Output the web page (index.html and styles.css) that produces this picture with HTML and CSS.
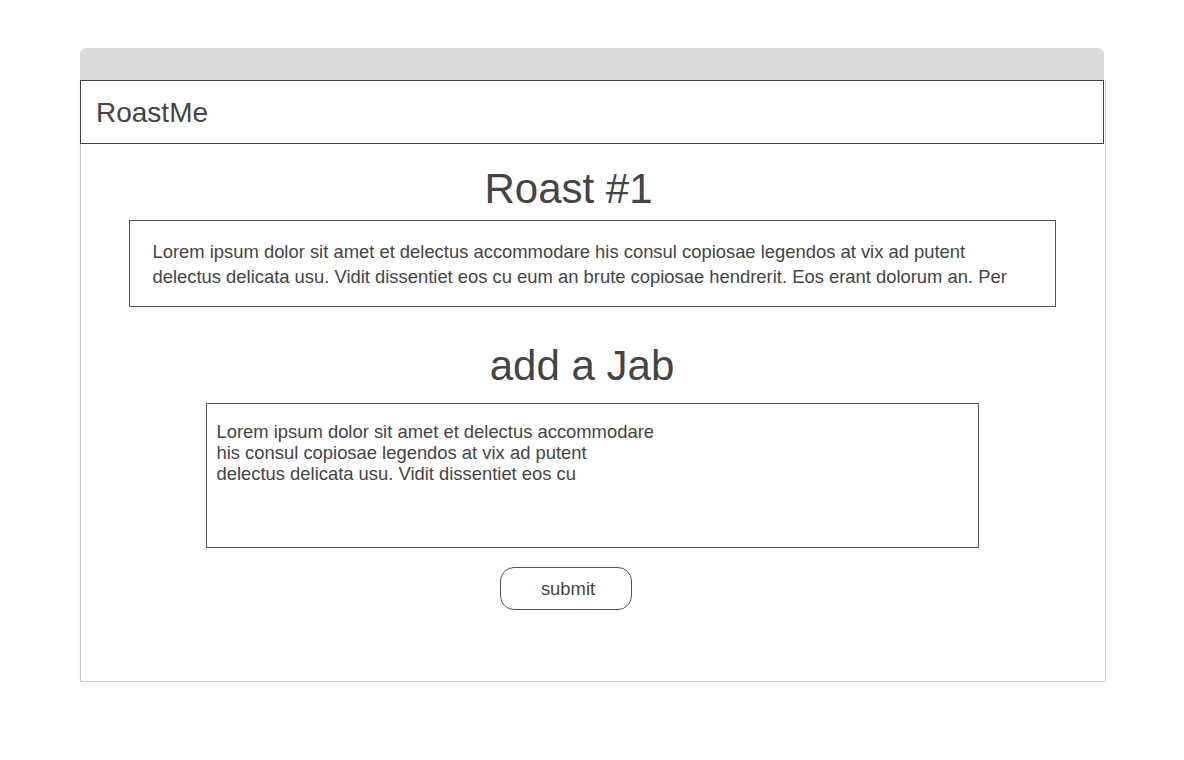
FILE: index.html
```html
<!DOCTYPE html>
<html>
<head>
<meta charset="utf-8">
<link rel="stylesheet" href="styles.css">
</head>
<body>
<div class="page">
  <div class="window">
    <div class="topbar"></div>
    <div class="frame">
      <div class="header">RoastMe</div>
      <div class="content">
        <h1 class="title title-roast">Roast #1</h1>
        <div class="roast-box">Lorem ipsum dolor sit amet et delectus accommodare his consul copiosae legendos at vix ad putent delectus delicata usu. Vidit dissentiet eos cu eum an brute copiosae hendrerit. Eos erant dolorum an. Per</div>
        <h2 class="title title-jab">add a Jab</h2>
        <div class="jab-box">Lorem ipsum dolor sit amet et delectus accommodare<br>his consul copiosae legendos at vix ad putent<br>delectus delicata usu. Vidit dissentiet eos cu</div>
        <button class="submit">submit</button>
      </div>
    </div>
  </div>
</div>
</body>
</html>
```
FILE: styles.css
```css
html, body {
  margin: 0;
  padding: 0;
  background: #ffffff;
}
body {
  font-family: "Liberation Sans", Arial, sans-serif;
  color: #444444;
}
.page {
  padding: 48px 0 0 80px;
}
.window {
  width: 1026px;
  display: flex;
  flex-direction: column;
}
.topbar {
  width: 1024px;
  height: 32px;
  background: #dcdcdc;
  border-radius: 6px 6px 0 0;
}
.frame {
  box-sizing: border-box;
  width: 1026px;
  height: 602px;
  border: 1px solid #cccccc;
  border-top: none;
  box-shadow: -1px 1px 3px rgba(0, 0, 0, 0.06);
  display: flex;
  flex-direction: column;
}
.header {
  box-sizing: border-box;
  width: 1024px;
  height: 64px;
  margin-left: -1px;
  border: 1px solid #444444;
  padding: 2px 0 0 15px;
  font-size: 28px;
  line-height: 60px;
  color: #444444;
}
.content {
  display: flex;
  flex-direction: column;
  align-items: center;
  padding-right: 2px;
}
.title {
  margin: 0;
  font-weight: normal;
  font-size: 42px;
  line-height: 48px;
  color: #444444;
}
.title-roast {
  margin-top: 21px;
  margin-right: 47px;
}
.roast-box {
  box-sizing: border-box;
  width: 927px;
  height: 87px;
  margin-top: 7px;
  border: 1px solid #555555;
  padding: 18px 23px 0 23px;
  font-size: 18.4px;
  line-height: 25px;
  overflow: hidden;
}
.title-jab {
  margin-top: 35px;
  margin-right: 20px;
}
.jab-box {
  box-sizing: border-box;
  width: 773px;
  height: 145px;
  margin-top: 13px;
  border: 1px solid #555555;
  padding: 17px 10px 0 10px;
  font-size: 18.4px;
  line-height: 21px;
}
.submit {
  box-sizing: border-box;
  width: 132px;
  height: 43px;
  margin-top: 19px;
  margin-right: 52px;
  padding: 0 0 0 4px;
  border: 1px solid #555555;
  border-radius: 14px;
  background: #ffffff;
  font-family: "Liberation Sans", Arial, sans-serif;
  font-size: 18.4px;
  color: #444444;
}
```
